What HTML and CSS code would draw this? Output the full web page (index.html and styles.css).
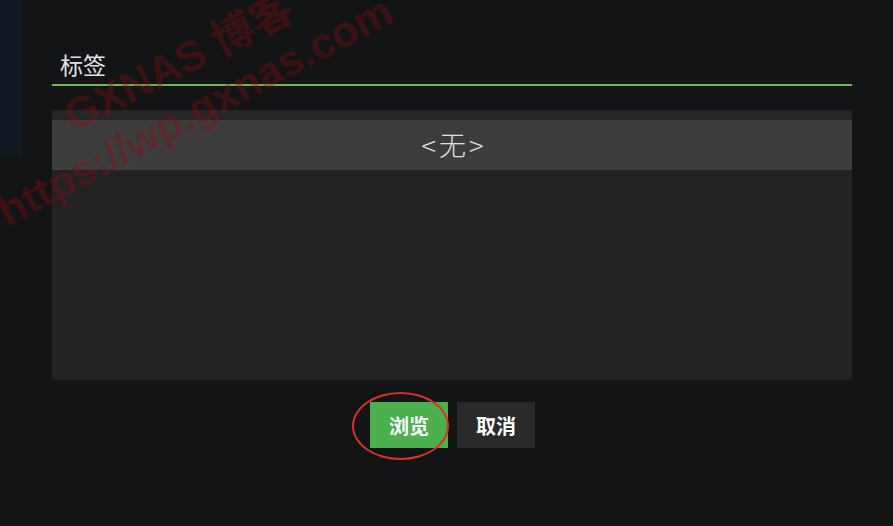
FILE: index.html
```html
<!DOCTYPE html>
<html lang="zh">
<head>
<meta charset="utf-8">
<title>标签</title>
<link rel="stylesheet" href="styles.css">
</head>
<body>
<div class="side-strip"></div>
<main class="dialog">
  <div class="field">
    <div class="field-label">标签</div>
  </div>
  <div class="list-box">
    <div class="list-item">&lt;无&gt;</div>
  </div>
  <div class="actions">
    <button class="btn btn-primary">浏览</button>
    <button class="btn btn-secondary">取消</button>
  </div>
</main>
<div class="annot-ellipse"></div>
<div class="watermark">
  <span class="wm wm-1">GXNAS 博客</span>
  <span class="wm wm-2">https://wp.gxnas.com</span>
</div>
</body>
</html>
```
FILE: styles.css
```css
html, body {
  margin: 0;
  padding: 0;
  width: 893px;
  height: 526px;
  overflow: hidden;
  background: #131416;
  font-family: "Noto Sans CJK SC", "Noto Sans", sans-serif;
  color: #e0e0e0;
}
body {
  position: relative;
}
.side-strip {
  position: absolute;
  left: 0;
  top: 0;
  width: 22px;
  height: 155px;
  background: #111922;
}
.dialog {
  margin-left: 52px;
  width: 800px;
  padding-top: 46px;
  display: flex;
  flex-direction: column;
}
.field {
  border-bottom: 2px solid #72b555;
  padding: 0 0 0 8px;
  height: 40px;
  box-sizing: border-box;
}
.field-label {
  font-size: 23px;
  line-height: 37px;
  color: #e2e2e2;
}
.list-box {
  margin-top: 24px;
  height: 270px;
  padding-top: 10px;
  box-sizing: border-box;
  background: linear-gradient(#262626 0 10px, #222222 10px);
}
.list-item {
  height: 50px;
  background: #3d3d3d;
  text-align: center;
  font-size: 27px;
  font-weight: 300;
  line-height: 50px;
  letter-spacing: 3px;
  padding-left: 4px;
  color: #e0e0e0;
}
.actions {
  display: flex;
  justify-content: center;
  gap: 9px;
  margin-top: 22px;
  padding-left: 1px;
}
.btn {
  width: 78px;
  height: 46px;
  border: 0;
  font-family: "Noto Sans CJK SC", sans-serif;
  font-size: 20px;
  font-weight: 700;
  color: #ffffff;
  padding: 0;
}
.btn-primary {
  background: #4caf50;
}
.btn-secondary {
  background: #2a2a2a;
}
.annot-ellipse {
  position: absolute;
  left: 352px;
  top: 392px;
  width: 93px;
  height: 64px;
  border: 2.5px solid #d6312c;
  border-radius: 50%;
}
.watermark {
  position: absolute;
  left: 0;
  top: 0;
  width: 893px;
  height: 526px;
  pointer-events: none;
}
.wm {
  position: absolute;
  font-family: "Liberation Sans", "Noto Sans CJK SC", sans-serif;
  font-weight: 700;
  font-size: 43px;
  line-height: 43px;
  white-space: nowrap;
  color: rgba(140, 12, 12, 0.36);
  transform-origin: 0 37px;
}
.wm-1 {
  left: 74px;
  top: 96px;
  transform: rotate(-27deg);
}
.wm-2 {
  left: 8px;
  top: 191px;
  transform: rotate(-28deg);
}
```
